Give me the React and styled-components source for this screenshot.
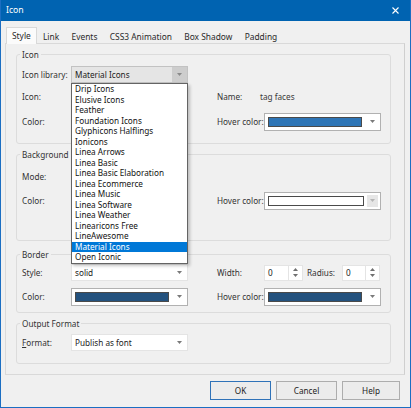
import React from "react";
import styled, { createGlobalStyle } from "styled-components";

const Global = createGlobalStyle`
  html, body { margin: 0; padding: 0; background: #f0f0f0; }
  body { font-family: "Segoe UI", "Noto Sans", sans-serif; font-size: 8.2px; color: #1e1e1e; }
  * { box-sizing: border-box; }
`;

const Window = styled.div`
  width: 411px;
  height: 408px;
  border: 1px solid #1b6ec2;
  border-top: none;
  background: #f0f0f0;
  display: flex;
  flex-direction: column;
`;

const TitleBar = styled.div`
  height: 21px;
  flex: none;
  background: #0063b1;
  color: #fff;
  font-size: 8.7px;
  display: flex;
  align-items: center;
  justify-content: space-between;
  padding: 0 11px 1px 5px;
`;

const Body = styled.div`
  flex: 1;
  display: flex;
  flex-direction: column;
  padding: 0 5px 0 4px;
`;

const TabStrip = styled.div`
  height: 22px;
  display: flex;
  align-items: flex-end;
  padding-left: 1px;
`;

const Tab = styled.div`
  position: relative;
  z-index: ${(p) => (p.$active ? 2 : 1)};
  display: flex;
  align-items: center;
  padding: 0 ${(p) => (p.$active ? 5 : 5.2)}px ${(p) => (p.$active ? 1 : 0)}px;
  height: ${(p) => (p.$active ? 17 : 14)}px;
  margin-bottom: ${(p) => (p.$active ? -1 : 0)}px;
  background: ${(p) => (p.$active ? "#fbfbfb" : "transparent")};
  border: 1px solid ${(p) => (p.$active ? "#d9d9d9" : "transparent")};
  border-bottom: none;
  white-space: nowrap;
  color: #2a2a2a;
  font-size: 8.4px;
`;

const Panel = styled.div`
  height: 332px;
  border: 1px solid #d9d9d9;
  border-right-color: #cfcfcf;
  padding: 0 13px 0 10px;
  display: flex;
  flex-direction: column;
`;

const Group = styled.fieldset`
  margin: ${(p) => p.$mt}px 0 0 0;
  padding: 0 0 ${(p) => p.$pb}px 5px;
  border: 1px solid #dcdcdc;
  border-radius: 3px;
  min-width: 0;
`;

const Legend = styled.legend`
  padding: 0 2px;
  margin-left: -2px;
  line-height: 11px;
  height: 11px;
  color: #333;
`;

const Row = styled.div`
  display: flex;
  align-items: center;
  height: 17px;
  margin-top: ${(p) => p.$mt}px;
`;

const Label = styled.span`
  flex: none;
  width: ${(p) => p.$w}px;
  margin-left: ${(p) => p.$ml || 0}px;
  white-space: nowrap;
  color: #333;
  u { text-decoration: underline; text-underline-offset: 1px; }
`;

const Value = styled.span`
  color: #3a3a3a;
  white-space: nowrap;
`;

const ComboWrap = styled.div`
  position: relative;
  flex: none;
`;

const comboBorder = { focus: "#c2c2c2", swatch: "#b1b1b1", plain: "#e4e4e4" };

const Combo = styled.div`
  width: ${(p) => p.$w || 117}px;
  height: ${(p) => p.$h || 17}px;
  display: flex;
  align-items: center;
  background: ${(p) => (p.$variant === "focus" ? "#e5e5e5" : "#fff")};
  border: 1px solid ${(p) => comboBorder[p.$variant || "plain"]};
  padding-left: 3px;
`;

const ComboText = styled.span`
  flex: 1;
  white-space: nowrap;
  color: #222;
`;

const ArrowBox = styled.span`
  flex: none;
  width: ${(p) => (p.$boxed ? 11 : 15)}px;
  align-self: stretch;
  margin: ${(p) => (p.$boxed ? "2px 2px 2px 2px" : "0")};
  display: flex;
  align-items: center;
  justify-content: center;
  background: ${(p) => p.$bg || "transparent"};
`;

const Swatch = styled.span`
  flex: 1;
  height: ${(p) => p.$h || 10}px;
  background: ${(p) => p.$color};
  border: 1px solid #4a4a4a;
  margin-right: ${(p) => p.$mr ?? 3}px;
`;

const DropList = styled.div`
  position: absolute;
  z-index: 20;
  top: 100%;
  left: 0;
  width: 117px;
  background: #fff;
  border: 1px solid #646464;
  box-shadow: 2px 2px 3px rgba(0, 0, 0, 0.22);
`;

const Item = styled.div`
  height: 10.5px;
  line-height: 10.5px;
  padding-left: 3px;
  white-space: nowrap;
  color: ${(p) => (p.$sel ? "#fff" : "#111")};
  background: ${(p) => (p.$sel ? "#0078d7" : "transparent")};
`;

const Spin = styled.div`
  flex: none;
  width: ${(p) => p.$w}px;
  height: 16px;
  display: flex;
  background: #fff;
  border: 1px solid #e4e4e4;
`;

const SpinInput = styled.span`
  flex: 1;
  padding-left: 3px;
  display: flex;
  align-items: center;
  color: #222;
`;

const SpinButtons = styled.span`
  flex: none;
  width: 14px;
  border-left: 1px solid #e4e4e4;
  display: flex;
  flex-direction: column;
  align-items: center;
  justify-content: center;
  gap: 3px;
`;

const Buttons = styled.div`
  display: flex;
  justify-content: flex-end;
  gap: 5px;
  margin-top: 6px;
  padding-right: 5px;
`;

const Button = styled.div`
  width: ${(p) => p.$w}px;
  height: 19px;
  display: flex;
  align-items: center;
  justify-content: center;
  background: #ececec;
  border: 1px solid ${(p) => (p.$default ? "#2f72b8" : "#adadad")};
  color: #222;
`;

const Caret = ({ color = "#7a7a7a" }) => (
  <svg width="5" height="3" viewBox="0 0 5 3">
    <path d="M0 0h5L2.5 3z" fill={color} />
  </svg>
);

const CaretUp = () => (
  <svg width="5" height="3" viewBox="0 0 5 3">
    <path d="M0 3h5L2.5 0z" fill="#707070" />
  </svg>
);

const CloseIcon = () => (
  <svg width="7" height="7" viewBox="0 0 7 7">
    <path d="M0.5 0.5l6 6M6.5 0.5l-6 6" stroke="#fff" strokeWidth="1.1" />
  </svg>
);

const LIBS = [
  "Drip Icons",
  "Elusive Icons",
  "Feather",
  "Foundation Icons",
  "Glyphicons Halflings",
  "Ionicons",
  "Linea Arrows",
  "Linea Basic",
  "Linea Basic Elaboration",
  "Linea Ecommerce",
  "Linea Music",
  "Linea Software",
  "Linea Weather",
  "Linearicons Free",
  "LineAwesome",
  "Material Icons",
  "Open Iconic",
];

const TABS = ["Style", "Link", "Events", "CSS3 Animation", "Box Shadow", "Padding"];

const SwatchCombo = ({ color, w, disabledArrow }) => (
  <Combo $variant="swatch" $w={w} $h={18}>
    <Swatch $color={color} $mr={disabledArrow ? 1 : 3} />
    {disabledArrow ? (
      <ArrowBox $boxed $bg="#e6e6e6">
        <Caret color="#b5b5b5" />
      </ArrowBox>
    ) : (
      <ArrowBox>
        <Caret />
      </ArrowBox>
    )}
  </Combo>
);

const Spinner = ({ w }) => (
  <Spin $w={w}>
    <SpinInput>0</SpinInput>
    <SpinButtons>
      <CaretUp />
      <Caret color="#707070" />
    </SpinButtons>
  </Spin>
);

export default function App() {
  return (
    <>
      <Global />
      <Window>
        <TitleBar>
          <span>Icon</span>
          <CloseIcon />
        </TitleBar>
        <Body>
          <TabStrip>
            {TABS.map((t, i) => (
              <Tab key={t} $active={i === 0}>
                {t}
              </Tab>
            ))}
          </TabStrip>
          <Panel>
            <Group $mt={5} $pb={13}>
              <Legend>Icon</Legend>
              <Row $mt={6}>
                <Label $w={49}>Icon library:</Label>
                <ComboWrap>
                  <Combo $variant="focus">
                    <ComboText>Material Icons</ComboText>
                    <ArrowBox $bg="#cdcdcd">
                      <Caret color="#8a8a8a" />
                    </ArrowBox>
                  </Combo>
                  <DropList>
                    {LIBS.map((l) => (
                      <Item key={l} $sel={l === "Material Icons"}>
                        {l}
                      </Item>
                    ))}
                  </DropList>
                </ComboWrap>
              </Row>
              <Row $mt={5}>
                <Label $w={49}>Icon:</Label>
                <Combo $w={117} />
                <Label $w={43} $ml={29}>Name:</Label>
                <Value>tag faces</Value>
              </Row>
              <Row $mt={8}>
                <Label $w={49}>Color:</Label>
                <SwatchCombo color="#2e75b6" w={117} />
                <Label $w={47} $ml={29}>Hover color:</Label>
                <SwatchCombo color="#2e75b6" w={117} />
              </Row>
            </Group>

            <Group $mt={5} $pb={31}>
              <Legend>Background</Legend>
              <Row $mt={8}>
                <Label $w={49}>Mode:</Label>
                <Combo $w={117} />
              </Row>
              <Row $mt={7}>
                <Label $w={49}>Color:</Label>
                <SwatchCombo color="#ffffff" w={117} />
                <Label $w={47} $ml={29}>Hover color:</Label>
                <SwatchCombo color="#ffffff" w={117} disabledArrow />
              </Row>
            </Group>

            <Group $mt={8} $pb={7}>
              <Legend>Border</Legend>
              <Row $mt={4}>
                <Label $w={49}>Style:</Label>
                <Combo $w={117}>
                  <ComboText>solid</ComboText>
                  <ArrowBox>
                    <Caret />
                  </ArrowBox>
                </Combo>
                <Label $w={47} $ml={29}>Width:</Label>
                <Spinner w={39} />
                <Label $w={35} $ml={4}>Radius:</Label>
                <Spinner w={38} />
              </Row>
              <Row $mt={7}>
                <Label $w={49}>Color:</Label>
                <SwatchCombo color="#24527e" w={117} />
                <Label $w={47} $ml={29}>Hover color:</Label>
                <SwatchCombo color="#24527e" w={117} />
              </Row>
            </Group>

            <Group $mt={5} $pb={12}>
              <Legend>Output Format</Legend>
              <Row $mt={5}>
                <Label $w={49}>
                  <u>F</u>ormat:
                </Label>
                <Combo $w={117}>
                  <ComboText>Publish as font</ComboText>
                  <ArrowBox>
                    <Caret />
                  </ArrowBox>
                </Combo>
              </Row>
            </Group>
          </Panel>
          <Buttons>
            <Button $w={61} $default>
              OK
            </Button>
            <Button $w={61}>Cancel</Button>
            <Button $w={58}>Help</Button>
          </Buttons>
        </Body>
      </Window>
    </>
  );
}
